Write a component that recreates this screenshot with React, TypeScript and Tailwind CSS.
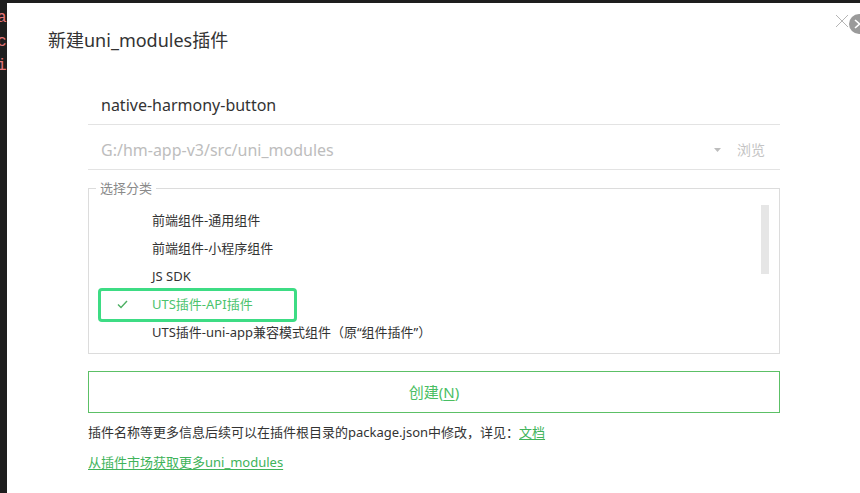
import React from 'react';

const categories = [
  '前端组件-通用组件',
  '前端组件-小程序组件',
  'JS SDK',
  'UTS插件-API插件',
  'UTS插件-uni-app兼容模式组件（原“组件插件”）',
];

const selected = 3;
const font = { fontFamily: '"Segoe UI", "Noto Sans", "Noto Sans CJK SC", sans-serif' };

export default function App() {
  return (
    <div className="w-[860px] h-[493px] bg-[#1e1e1e] flex overflow-hidden text-[#333]" style={font}>
      {/* editor peeking out behind the dialog */}
      <div className="w-[7px] shrink-0 overflow-hidden pt-[6px] font-['Liberation_Mono',monospace] text-[16px] leading-[24px] text-[#e4767a]">
        <div className="-ml-[3px]">a</div>
        <div className="-ml-[3px]">c</div>
        <div className="-ml-[3px]">i</div>
      </div>

      <div className="relative flex-1 mt-[3px] bg-white">
        {/* close */}
        <svg className="absolute left-[828px] top-[11px]" width="14" height="14" viewBox="0 0 14 14">
          <path d="M1 1L13 13M13 1L1 13" stroke="#b5b5b5" strokeWidth="1" />
        </svg>
        <div className="absolute left-[842px] top-[11px] w-[20px] h-[20px] rounded-full bg-[#9a9a9a] flex items-center pl-[5px]">
          <svg width="7" height="10" viewBox="0 0 7 10">
            <path d="M1 1L5.5 5L1 9" stroke="#fff" strokeWidth="1.6" fill="none" />
          </svg>
        </div>

        <h1 className="pl-[41px] pt-[25px] text-[18px] leading-[24px] text-[#333]">新建uni_modules插件</h1>

        <div className="ml-[81px] w-[692px] mt-[31px]">
          <div className="h-[42px] border-b border-[#e3e3e3] flex items-center pt-[3px] pl-[13px] text-[16px] text-[#333]">
            native-harmony-button
          </div>
          <div className="h-[45px] border-b border-[#e3e3e3] flex items-center pt-[5px] pl-[13px] pr-[15px] text-[16px]">
            <span className="flex-1 text-[#bdbdbd]">G:/hm-app-v3/src/uni_modules</span>
            <svg className="mr-[16px]" width="7" height="4" viewBox="0 0 7 4">
              <path d="M0 0H7L3.5 4Z" fill="#bdbdbd" />
            </svg>
            <span className="text-[14px] text-[#c4c4c4]">浏览</span>
          </div>

          <div className="relative mt-[18px] h-[166px] border border-[#dcdcdc] pt-[18px] pl-[9px]">
            <span className="absolute left-[7px] -top-[10px] bg-white px-[4px] text-[13px] leading-[18px] text-[#8a8a8a]">
              选择分类
            </span>
            <div className="absolute right-[10px] top-[16px] w-[8px] h-[69px] bg-[#e6e6e6]" />
            {categories.map((c, i) => (
              <div
                key={c}
                className={
                  'relative h-[28px] flex items-center text-[13px] ' +
                  (i === selected ? 'text-[#4cc36d]' : 'text-[#333]')
                }
              >
                {i === selected && (
                  <>
                    <span className="absolute left-0 -top-[3px] w-[199px] h-[34px] border-[3px] border-[#3ddc84] rounded-[4px]" />
                    <svg className="absolute left-[19px] top-[9px]" width="11" height="9" viewBox="0 0 11 9">
                      <path d="M1 4.5L4 7.5L10 1" stroke="#4caf62" strokeWidth="1.4" fill="none" />
                    </svg>
                  </>
                )}
                <span className="pl-[54px]">{c}</span>
              </div>
            ))}
          </div>

          <button className="mt-[17px] w-full h-[42px] border border-[#5cc066] flex items-center justify-center text-[15px] text-[#48be62]">
            创建(<span className="underline underline-offset-2">N</span>)
          </button>

          <p className="mt-[9px] text-[13px] leading-[20px] text-[#333]">
            插件名称等更多信息后续可以在插件根目录的package.json中修改，详见：
            <span className="text-[#40b35a] underline underline-offset-2">文档</span>
          </p>
          <p className="mt-[10px] text-[13px] leading-[20px] text-[#40b35a] underline underline-offset-2">
            从插件市场获取更多uni_modules
          </p>
        </div>
      </div>
    </div>
  );
}
